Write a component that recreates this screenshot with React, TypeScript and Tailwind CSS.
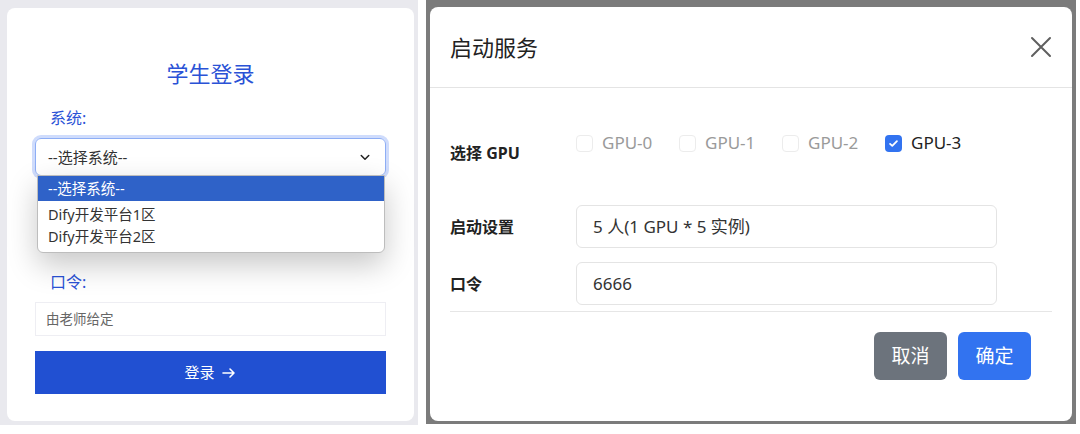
const font = { fontFamily: '"Noto Sans", "Noto Sans CJK SC", sans-serif' };

const LoginCard = () => {
  return (
    <div className="w-[418px] h-[425px] bg-[#e9e9ee] pl-[7px] pt-[8px] pr-[4px] pb-[4px]">
      <div className="h-full bg-white rounded-[8px] px-[28px] pt-[50px] relative">
        <h1 className="text-center text-[22px] leading-[30px] text-[#2a52d6]">学生登录</h1>

        <div className="mt-[19px] pl-[15px] text-[16px] leading-[22px] text-[#2a52d6]">系统:</div>

        <div className="relative mt-[9px]">
          <div className="h-[38px] rounded-[6px] border border-[#8eaef5] ring-[3px] ring-[#cfdcfc] flex items-center justify-between pl-[12px] pr-[14px] text-[15px] text-[#333]">
            <span>--选择系统--</span>
            <svg width="12" height="12" viewBox="0 0 16 16" fill="none" stroke="#222" strokeWidth="2" strokeLinecap="round" strokeLinejoin="round">
              <path d="M3 6l5 5 5-5" />
            </svg>
          </div>

          {/* open dropdown list */}
          <div className="absolute left-[2px] right-[1px] top-[37px] bg-white rounded-b-[6px] border border-[#bdbdbd] shadow-[0_12px_30px_rgba(0,0,0,0.22)] pb-[4px] z-10 text-[14.5px] text-[#333]">
            <div className="h-[25px] bg-[#2f62c8] text-white pl-[10px] flex items-center">--选择系统--</div>
            <div className="h-[25px] pl-[10px] flex items-end">Dify开发平台1区</div>
            <div className="h-[22px] pl-[10px] flex items-center">Dify开发平台2区</div>
          </div>
        </div>

        <div className="mt-[95px] pl-[15px] text-[16px] leading-[22px] text-[#2a52d6]">口令:</div>

        <div className="mt-[9px] h-[34px] border border-[#eeeef3] flex items-center pl-[10px] text-[13.5px] text-[#666]">
          由老师给定
        </div>

        <button className="mt-[15px] w-full h-[43px] bg-[#2150d2] text-white text-[15px] flex items-center justify-center gap-[6px]">
          <span>登录</span>
          <svg width="16" height="16" viewBox="0 0 16 16" fill="none" stroke="#fff" strokeWidth="1.6" strokeLinecap="round" strokeLinejoin="round">
            <path d="M2 8h11M9 4l4 4-4 4" />
          </svg>
        </button>
      </div>
    </div>
  );
};

const GpuCheck = ({ label, checked }: { label: string; checked?: boolean }) => {
  return (
    <div className="w-[103px] flex items-center gap-[9px]">
      {checked ? (
        <span className="w-[17px] h-[17px] rounded-[4px] bg-[#3273f0] flex items-center justify-center">
          <svg width="11" height="11" viewBox="0 0 16 16" fill="none" stroke="#fff" strokeWidth="2.6" strokeLinecap="round" strokeLinejoin="round">
            <path d="M3 8.5l3.2 3L13 4.5" />
          </svg>
        </span>
      ) : (
        <span className="w-[17px] h-[17px] rounded-[4px] border border-[#ececec] bg-white" />
      )}
      <span className={checked ? 'text-[17px] text-[#222]' : 'text-[17px] text-[#9a9a9a]'}>{label}</span>
    </div>
  );
};

const StartModal = () => {
  return (
    <div className="w-[650px] h-[424px] bg-[#7b7b7b] pl-[4px] pt-[7px] pr-[4px] pb-[3px]">
      <div className="h-full bg-white rounded-[8px] flex flex-col">
        <div className="h-[81px] border-b border-[#e4e4e4] flex items-center justify-between pl-[20px] pr-[20px]">
          <span className="text-[22px] text-[#222]">启动服务</span>
          <svg width="22" height="22" viewBox="0 0 22 22" fill="none" stroke="#5f5f5f" strokeWidth="2" strokeLinecap="round">
            <path d="M2 2l18 18M20 2L2 20" />
          </svg>
        </div>

        <div className="px-[20px]">
          <div className="flex mt-[41px]">
            <div className="w-[126px] pt-[12px] text-[16px] leading-[24px] font-bold text-[#222]">选择 GPU</div>
            <div className="flex items-center h-[28px]">
              <GpuCheck label="GPU-0" />
              <GpuCheck label="GPU-1" />
              <GpuCheck label="GPU-2" />
              <GpuCheck label="GPU-3" checked />
            </div>
          </div>

          <div className="flex items-center mt-[40px]">
            <div className="w-[126px] text-[16px] font-bold text-[#222]">启动设置</div>
            <div className="w-[421px] h-[43px] rounded-[6px] border border-[#e4e4e4] flex items-center pl-[16px] text-[17px] text-[#333]">
              5 人(1 GPU * 5 实例)
            </div>
          </div>

          <div className="flex items-center mt-[14px]">
            <div className="w-[126px] text-[16px] font-bold text-[#222]">口令</div>
            <div className="w-[421px] h-[43px] rounded-[6px] border border-[#e4e4e4] flex items-center pl-[16px] text-[17px] text-[#333]">
              6666
            </div>
          </div>

          <div className="mt-[6px] border-t border-[#e6e6e6]" />

          <div className="flex justify-end gap-[11px] mt-[20px] pr-[21px]">
            <button className="w-[73px] h-[48px] rounded-[6px] bg-[#6c737c] text-white text-[19px]">取消</button>
            <button className="w-[73px] h-[48px] rounded-[6px] bg-[#3273f0] text-white text-[19px]">确定</button>
          </div>
        </div>
      </div>
    </div>
  );
};

const App = () => {
  return (
    <div className="w-[1080px] h-[434px] bg-white flex gap-[8px]" style={font}>
      <LoginCard />
      <StartModal />
    </div>
  );
};

export default App;
